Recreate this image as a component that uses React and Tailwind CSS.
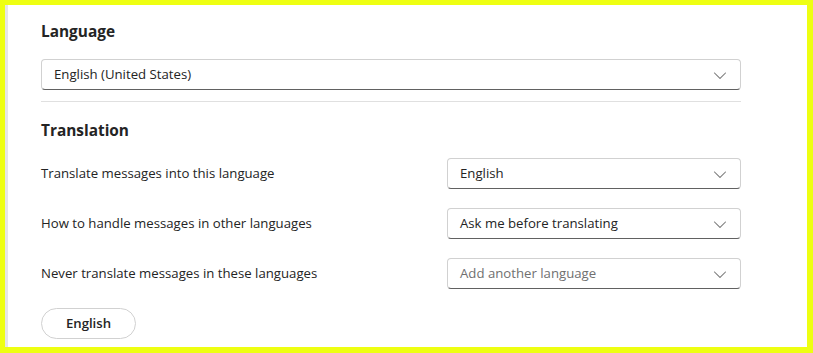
import React from "react";

const font = { fontFamily: '"Open Sans", "Noto Sans", sans-serif' };

function Chevron() {
  return (
    <svg width="20" height="20" viewBox="0 0 20 20" fill="#707070">
      <path d="M15.85 7.65c.2.2.2.5 0 .7l-5.46 5.49a.55.55 0 0 1-.78 0L4.15 8.35a.5.5 0 1 1 .7-.7L10 12.8l5.15-5.16c.2-.2.5-.2.7 0Z" />
    </svg>
  );
}

function Select({ value, placeholder, className = "" }) {
  return (
    <div
      className={`flex h-[31px] items-center justify-between rounded-[4px] border border-[#d1d1d1] border-b-[#616161] bg-white pl-[12px] pr-[10px] ${className}`}
    >
      <span className={`text-[13.2px] ${placeholder ? "text-[#707070]" : "text-[#242424]"}`}>
        {value}
      </span>
      <Chevron />
    </div>
  );
}

const rows = [
  { label: "Translate messages into this language", value: "English" },
  { label: "How to handle messages in other languages", value: "Ask me before translating" },
  { label: "Never translate messages in these languages", value: "Add another language", placeholder: true },
];

export default function App() {
  return (
    <div className="h-[353px] w-[813px] bg-[#eeff12] pl-[5px] pt-[5px]" style={font}>
      <div className="h-[342px] w-[802px] overflow-hidden border-l-[3px] border-[#e6e6e6] bg-white pl-[33px] pt-[16px] text-[#242424]">
        <div className="w-[700px]">
          <h2 className="text-[15.4px] font-bold leading-[22px]">Language</h2>
          <Select value="English (United States)" className="mt-[16px]" />
          <div className="mt-[11px] h-px bg-[#e0e0e0]" />
          <h2 className="mt-[18px] text-[15.4px] font-bold leading-[22px]">Translation</h2>
          <div className="mt-[16px] flex flex-col gap-[19px]">
            {rows.map((r) => (
              <div key={r.label} className="flex items-center justify-between">
                <span className="text-[13.2px]">{r.label}</span>
                <Select value={r.value} placeholder={r.placeholder} className="w-[294px]" />
              </div>
            ))}
          </div>
          <button className="mt-[19px] h-[31px] w-[95px] rounded-full border border-[#d1d1d1] text-[13.2px] font-semibold text-[#242424]">
            English
          </button>
        </div>
      </div>
    </div>
  );
}
